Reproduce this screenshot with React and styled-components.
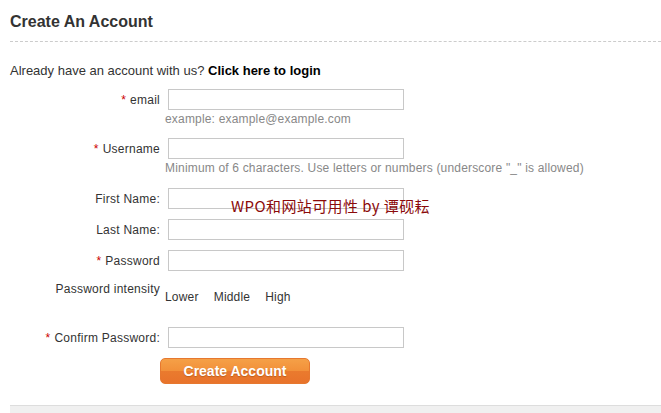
import React from "react";
import styled, { createGlobalStyle } from "styled-components";

const Global = createGlobalStyle`
  html, body { margin: 0; padding: 0; background: #fff; }
  body { font-family: Arial, "Liberation Sans", sans-serif; color: #333; overflow: hidden; }
`;

const Page = styled.div`
  position: relative;
  width: 661px;
  height: 413px;
  padding-left: 10px;
  box-sizing: border-box;
  display: flex;
  flex-direction: column;
  overflow: hidden;
`;

const Title = styled.h1`
  margin: 0;
  padding-top: 10px;
  line-height: 24px;
  font-size: 16px;
  font-weight: bold;
  color: #333;
  border-bottom: 1px dashed #ccc;
  height: 31px;
`;

const Intro = styled.p`
  margin: 21px 0 0;
  font-size: 13px;
  line-height: 16px;
  color: #333;
  b { color: #000; }
`;

const Form = styled.form`
  display: flex;
  flex-direction: column;
  margin-top: 10px;
`;

const Row = styled.div`
  display: grid;
  grid-template-columns: 150px 1fr;
  column-gap: 5px;
  align-items: ${(p) => (p.$top ? "start" : "center")};
  margin-top: ${(p) => p.$mt || 0}px;
`;

const Label = styled.label`
  text-align: right;
  font-size: 12px;
  line-height: 16px;
  letter-spacing: 0.25px;
  color: #333;
  white-space: nowrap;
`;

const Star = styled.span`
  color: #c00;
  margin-right: 4px;
`;

const Input = styled.input`
  box-sizing: border-box;
  width: 236px;
  height: 21px;
  margin: 0 0 0 3px;
  border: 1px solid #c8c8c8;
  background: #fff;
  padding: 0 3px;
  outline: none;
`;

const Hint = styled.div`
  grid-column: 2;
  font-size: 12px;
  line-height: 14px;
  letter-spacing: 0.18px;
  color: #888;
  margin-top: 2px;
`;

const Options = styled.div`
  display: flex;
  gap: 15px;
  padding-top: 8px;
  font-size: 12px;
  line-height: 16px;
  letter-spacing: 0.2px;
  color: #333;
`;

const Button = styled.button`
  align-self: flex-start;
  margin: 10px 0 0 150px;
  width: 150px;
  height: 26px;
  border: 1px solid #e6782f;
  border-radius: 5px;
  background: linear-gradient(to bottom, #f5a047 0%, #f2913a 48%, #ea7a2e 52%, #e8732b 100%);
  color: #fff;
  font-family: Arial, "Liberation Sans", sans-serif;
  font-size: 14px;
  font-weight: bold;
  text-shadow: 0 1px 1px rgba(150, 70, 10, 0.5);
  padding: 0;
  cursor: pointer;
`;

const Footer = styled.div`
  margin-top: 21px;
  flex: 1;
  background: #f0f0f0;
  border-top: 1px solid #ddd;
`;

const Watermark = styled.div`
  position: absolute;
  left: 231px;
  top: 197px;
  font-family: "Noto Sans CJK SC", sans-serif;
  font-size: 15px;
  line-height: 18px;
  color: #8b0a0a;
  white-space: nowrap;
  letter-spacing: 0.4px;
`;

const Field = ({ label, req, hint, mt }) => (
  <>
    <Row $mt={mt}>
      <Label>
        {req && <Star>*</Star>}
        {label}
      </Label>
      <Input />
    </Row>
    {hint && (
      <Row>
        <span />
        <Hint>{hint}</Hint>
      </Row>
    )}
  </>
);

export default function App() {
  return (
    <>
      <Global />
      <Page>
        <Title>Create An Account</Title>
        <Intro>
          Already have an account with us? <b>Click here to login</b>
        </Intro>
        <Form onSubmit={(e) => e.preventDefault()}>
          <Field req label="email" hint="example: example@example.com" />
          <Field
            req
            label="Username"
            mt={12}
            hint={'Minimum of 6 characters. Use letters or numbers (underscore "_" is allowed)'}
          />
          <Field label="First Name:" mt={13} />
          <Field label="Last Name:" mt={10} />
          <Field req label="Password" mt={10} />
          <Row $top $mt={10}>
            <Label>Password intensity</Label>
            <Options>
              <span>Lower</span>
              <span>Middle</span>
              <span>High</span>
            </Options>
          </Row>
          <Field req label="Confirm Password:" mt={22} />
          <Button type="submit">Create Account</Button>
        </Form>
        <Footer />
        <Watermark>WPO和网站可用性 by 谭砚耘</Watermark>
      </Page>
    </>
  );
}
